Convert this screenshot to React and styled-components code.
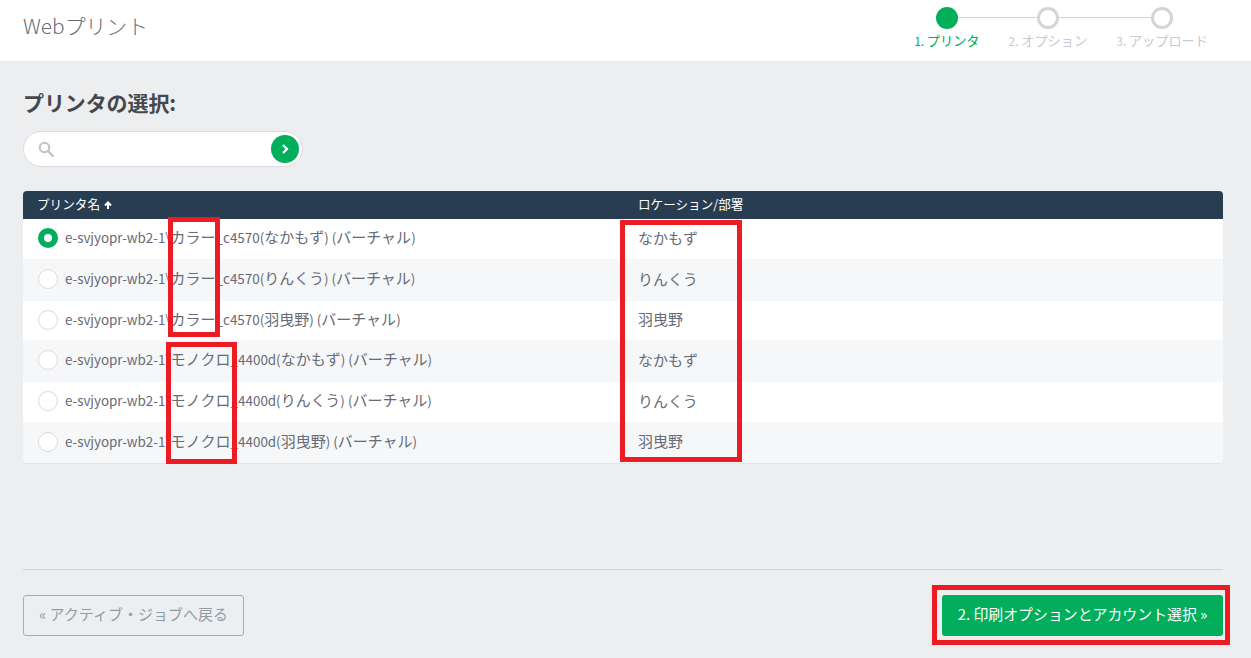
import React from "react";
import styled, { createGlobalStyle } from "styled-components";

const Global = createGlobalStyle`
  html, body { margin: 0; padding: 0; background: #edeef0; }
  body { font-family: "Noto Sans CJK JP", "Noto Sans", sans-serif; color: #666b75; }
  * { box-sizing: border-box; }
`;
const Page = styled.div`
  position: relative;
  width: 1251px;
  height: 658px;
  overflow: hidden;
`;
const Header = styled.header`
  height: 61px;
  background: #fff;
  display: flex;
  justify-content: space-between;
  padding: 7px 43px 0 23px;
`;
const AppTitle = styled.h1`
  margin: 0;
  font-size: 20.85px;
  font-weight: 300;
  line-height: 36px;
  color: #666b75;
`;
const Stepper = styled.ol`
  list-style: none;
  margin: 0;
  padding: 0;
  display: flex;
  gap: 29px;
`;
const Step = styled.li`
  position: relative;
  display: flex;
  flex-direction: column;
  align-items: center;
  gap: 2px;
  font-size: 13.2px;
  line-height: 20px;
  color: ${(p) => (p.$active ? "#00ae5b" : "#c7cad0")};
  &::after {
    content: "";
    display: ${(p) => (p.$line ? "block" : "none")};
    position: absolute;
    top: 10px;
    left: 50%;
    width: ${(p) => p.$line}px;
    height: 1px;
    background: #cfd1d4;
  }
`;
const StepLabel = styled.span`
  white-space: nowrap;
`;
const StepNumber = styled.span`
  font-size: 12px;
`;
const Dot = styled.span`
  position: relative;
  z-index: 1;
  width: 22px;
  height: 22px;
  border-radius: 50%;
  background: ${(p) => (p.$active ? "#00ae5b" : "#fff")};
  border: 3px solid ${(p) => (p.$active ? "#00ae5b" : "#d2d4d7")};
`;
const Main = styled.main`
  padding: 25px 28px 0 23px;
`;
const Heading = styled.h2`
  margin: 0;
  font-size: 21px;
  line-height: 32px;
  font-weight: 700;
  color: #45484d;
  letter-spacing: -0.1px;
`;
const Search = styled.div`
  margin-top: 13px;
  width: 280px;
  height: 36px;
  background: #fff;
  border: 1px solid #d8dbdf;
  border-radius: 18px;
  display: flex;
  align-items: center;
  justify-content: space-between;
  padding: 0 3px 0 14px;
`;
const SearchGo = styled.span`
  width: 28px;
  height: 28px;
  border-radius: 50%;
  background: #00ae5b;
  display: flex;
  align-items: center;
  justify-content: center;
`;
const Table = styled.section`
  margin-top: 24px;
  border-radius: 4px;
  overflow: hidden;
  box-shadow: 0 1px 0 #e3e5e8;
`;
const HeadRow = styled.div`
  height: 28px;
  background: #293d52;
  color: #fff;
  font-size: 12.6px;
  display: grid;
  grid-template-columns: 601px 1fr;
  align-items: center;
  padding: 0 0 4px 14px;
`;
const HeadCell = styled.span`
  display: flex;
  align-items: center;
  gap: 4px;
`;
const SortArrow = styled.svg`
  margin-top: 3px;
`;
const Row = styled.div`
  height: ${(p) => p.$h}px;
  background: ${(p) => (p.$alt ? "#f6f7f9" : "#fff")};
  display: grid;
  grid-template-columns: 600px 1fr;
  align-items: center;
  padding: 0 0 4px 15px;
  font-size: 15px;
  color: #666b75;
`;
const PrinterCell = styled.span`
  display: flex;
  align-items: center;
  gap: 7px;
  white-space: nowrap;
`;
const PrinterName = styled.span`
  display: block;
  padding-bottom: 1px;
`;
const Latin = styled.span`
  font-size: 13.4px;
`;
const Radio = styled.span`
  width: 20px;
  height: 20px;
  flex: none;
  margin-top: 2px;
  border-radius: 50%;
  background: #fff;
  border: ${(p) => (p.$on ? "6px solid #00ae5b" : "1px solid #d8dbdf")};
`;
const Footer = styled.footer`
  margin-top: 106px;
  border-top: 1px solid #d2d4d7;
  padding-top: 25px;
  display: flex;
  justify-content: space-between;
`;
const BackButton = styled.button`
  width: 221px;
  height: 41px;
  border: 1px solid #a3b0b0;
  border-radius: 3px;
  background: transparent;
  color: #8f9da3;
  font: inherit;
  font-size: 15px;
  padding: 0 0 4px;
`;
const NextButton = styled.button`
  width: 281px;
  height: 41px;
  border: 0;
  border-radius: 3px;
  background: #00ae5b;
  color: #fff;
  font: inherit;
  font-size: 14.9px;
  padding: 0 0 4px;
`;
const Mark = styled.div`
  position: absolute;
  left: ${(p) => p.$x}px;
  top: ${(p) => p.$y}px;
  width: ${(p) => p.$w}px;
  height: ${(p) => p.$h}px;
  border: 5px solid #ed1c24;
  pointer-events: none;
`;

const rows = [
  [["e-svjyopr-wb2-1\\", "カラー", "_c4570(", "なかもず", ") (", "バーチャル", ")"], "なかもず", 40, false],
  [["e-svjyopr-wb2-1\\", "カラー", "_c4570(", "りんくう", ") (", "バーチャル", ")"], "りんくう", 42, true],
  [["e-svjyopr-wb2-1\\", "カラー", "_c4570(", "羽曳野", ") (", "バーチャル", ")"], "羽曳野", 39, false],
  [["e-svjyopr-wb2-1\\", "モノクロ", "_4400d(", "なかもず", ") (", "バーチャル", ")"], "なかもず", 42, true],
  [["e-svjyopr-wb2-1\\", "モノクロ", "_4400d(", "りんくう", ") (", "バーチャル", ")"], "りんくう", 40, false],
  [["e-svjyopr-wb2-1\\", "モノクロ", "_4400d(", "羽曳野", ") (", "バーチャル", ")"], "羽曳野", 41, true],
];

export default function App() {
  return (
    <Page>
      <Global />
      <Header>
        <AppTitle>Webプリント</AppTitle>
        <Stepper>
          <Step $active $line={102}><Dot $active /><StepLabel><StepNumber>1. </StepNumber>プリンタ</StepLabel></Step>
          <Step $line={114}><Dot /><StepLabel><StepNumber>2. </StepNumber>オプション</StepLabel></Step>
          <Step><Dot /><StepLabel><StepNumber>3. </StepNumber>アップロード</StepLabel></Step>
        </Stepper>
      </Header>
      <Main>
        <Heading>プリンタの選択:</Heading>
        <Search>
          <svg width="17" height="17" viewBox="0 0 17 17" fill="none" stroke="#bfc2c6" strokeWidth="2">
            <circle cx="6.5" cy="6.5" r="4.8" />
            <path d="M10 10l5.5 5.5" strokeWidth="2.4" />
          </svg>
          <SearchGo>
            <svg width="10" height="10" viewBox="0 0 10 10" fill="none" stroke="#fff" strokeWidth="2.2">
              <path d="M3 1l4 4-4 4" />
            </svg>
          </SearchGo>
        </Search>
        <Table>
          <HeadRow>
            <HeadCell>
              プリンタ名
              <SortArrow width="8" height="8" viewBox="0 0 8 8" fill="none" stroke="#fff" strokeWidth="2">
                <path d="M4 8V2M1 4.5l3-3 3 3" />
              </SortArrow>
            </HeadCell>
            <HeadCell>ロケーション/部署</HeadCell>
          </HeadRow>
          {rows.map(([parts, loc, h, alt], i) => (
            <Row key={i} $h={h} $alt={alt}>
              <PrinterCell>
                <Radio $on={i === 0} />
                <PrinterName>
                  {parts.map((t, j) => (j % 2 === 0 ? <Latin key={j}>{t}</Latin> : t))}
                </PrinterName>
              </PrinterCell>
              <span>{loc}</span>
            </Row>
          ))}
        </Table>
        <Footer>
          <BackButton>« アクティブ・ジョブへ戻る</BackButton>
          <NextButton>2. 印刷オプションとアカウント選択 »</NextButton>
        </Footer>
      </Main>
      <Mark $x={168} $y={217} $w={52} $h={120} />
      <Mark $x={166} $y={342} $w={71} $h={122} />
      <Mark $x={620} $y={220} $w={122} $h={242} />
      <Mark $x={932} $y={585} $w={298} $h={60} />
    </Page>
  );
}
